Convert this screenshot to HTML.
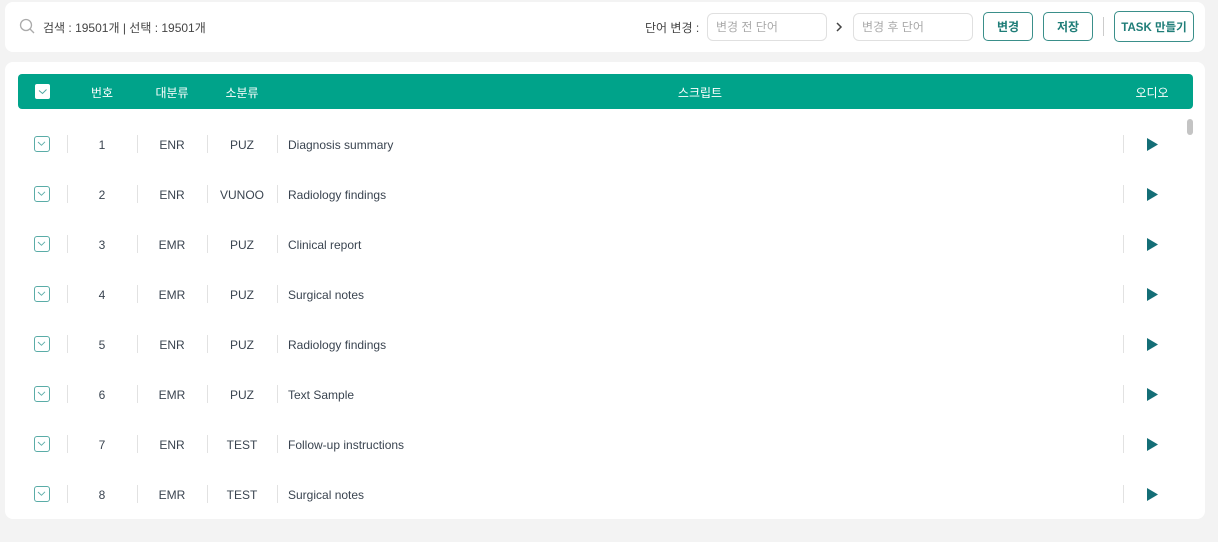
<!DOCTYPE html>
<html><head><meta charset="utf-8">
<style>
*{box-sizing:border-box;margin:0;padding:0}
body{width:1218px;height:542px;background:#f3f3f3;font-family:"Liberation Sans","Noto Sans CJK KR",sans-serif;position:relative;overflow:hidden;color:#3a4450}
.card{position:absolute;background:#fff;border-radius:8px}
.abs{position:absolute}
.inp{position:absolute;top:13px;height:28px;width:120px;border:1px solid #e0e0e0;border-radius:6px;font-size:12px;color:#aaa;padding:6px 8px;line-height:14px}
.btn{position:absolute;border:1.5px solid #3a8f8a;border-radius:5px;color:#1f7d78;font-weight:bold;font-size:12px;display:flex;align-items:center;justify-content:center;background:#fff}
.hdr{position:absolute;left:18px;top:74px;width:1175px;height:35px;background:#00a38a;border-radius:4px;color:#fff;font-size:12px}
.hdr span{position:absolute;top:10px;transform:translateX(-50%)}
.row{position:absolute;left:18px;width:1175px;height:20px;font-size:12px}
.row .c{position:absolute;top:3px;transform:translateX(-50%)}
.sep{position:absolute;top:0;width:1px;height:18px;background:#e2e2e2}
.cb{position:absolute;width:16px;height:16px;border:1.5px solid #5aaca7;border-radius:3px;left:16px;top:1px}
</style></head><body>
<div class="card" style="left:5px;top:2px;width:1200px;height:50px"></div>
<svg class="abs" style="left:19px;top:18px" width="17" height="17" viewBox="0 0 17 17"><circle cx="7" cy="7" r="5.5" fill="none" stroke="#aaa" stroke-width="1.3"/><line x1="11" y1="11" x2="15" y2="15" stroke="#aaa" stroke-width="1.3"/></svg>
<div class="abs" style="left:43px;top:19px;font-size:12px;color:#444">검색 : 19501개 | 선택 : 19501개</div>
<div class="abs" style="left:645px;top:19px;font-size:12px;color:#444">단어 변경 :</div>
<div class="inp" style="left:707px">변경 전 단어</div>
<svg class="abs" style="left:835px;top:21px" width="8" height="12" viewBox="0 0 8 12"><path d="M2 2l4 4-4 4" fill="none" stroke="#444" stroke-width="1.5"/></svg>
<div class="inp" style="left:853px">변경 후 단어</div>
<div class="btn" style="left:983px;top:12px;width:50px;height:29px">변경</div>
<div class="btn" style="left:1043px;top:12px;width:50px;height:29px">저장</div>
<div class="abs" style="left:1103px;top:17px;width:1px;height:19px;background:#ccc"></div>
<div class="btn" style="left:1114px;top:11px;width:80px;height:31px;font-size:11.5px">TASK 만들기</div>

<div class="card" style="left:5px;top:62px;width:1200px;height:457px"></div>
<div class="hdr">
<svg class="abs" style="left:17px;top:10px" width="15" height="15" viewBox="0 0 15 15"><rect width="15" height="15" rx="2" fill="#fff"/><path d="M4 6.5l3.5 3 4-4" fill="none" stroke="#4fa7a2" stroke-width="1"/></svg>
<span style="left:84px">번호</span><span style="left:154px">대분류</span><span style="left:224px">소분류</span><span style="left:682px">스크립트</span><span style="left:1134px">오디오</span>
</div>
<div class="abs" style="left:1187px;top:119px;width:6px;height:16px;background:#c4c4c4;border-radius:3px"></div>
<div id="rows"></div>
<script>
var d=[["1","ENR","PUZ","Diagnosis summary"],["2","ENR","VUNOO","Radiology findings"],["3","EMR","PUZ","Clinical report"],["4","EMR","PUZ","Surgical notes"],["5","ENR","PUZ","Radiology findings"],["6","EMR","PUZ","Text Sample"],["7","ENR","TEST","Follow-up instructions"],["8","EMR","TEST","Surgical notes"]];
var h="";
d.forEach(function(r,i){var t=135+i*50;
h+='<div class="row" style="top:'+t+'px"><div class="cb"><svg width="13" height="13" viewBox="0 0 13 13" style="position:absolute;left:0;top:0"><path d="M3 5l3.5 3.3 3.5-3.5" fill="none" stroke="#5aaca7" stroke-width="0.9"/></svg></div>'+
'<div class="sep" style="left:49px"></div><div class="sep" style="left:119px"></div><div class="sep" style="left:189px"></div><div class="sep" style="left:259px"></div><div class="sep" style="left:1105px"></div>'+
'<span class="c" style="left:84px">'+r[0]+'</span><span class="c" style="left:154px">'+r[1]+'</span><span class="c" style="left:224px">'+r[2]+'</span><span class="c" style="left:270px;transform:none">'+r[3]+'</span>'+
'<svg style="position:absolute;left:1129px;top:3px" width="11" height="13" viewBox="0 0 11 13"><path d="M0 0L11 6.5L0 13Z" fill="#146e76"/></svg></div>';});
document.getElementById("rows").innerHTML=h;
</script>
</body></html>
